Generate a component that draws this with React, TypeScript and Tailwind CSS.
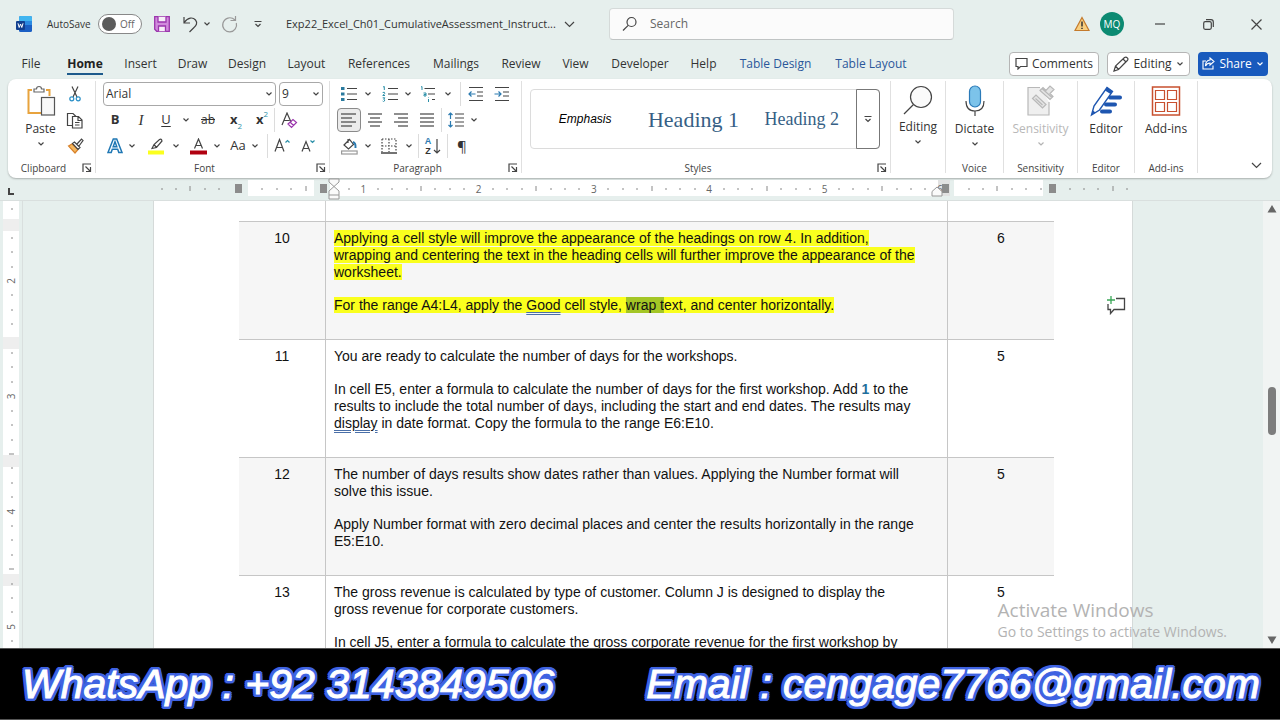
import React from 'react';

const RULER_ZERO = 95;
const EIGHTH = 115.3 / 8;

const TABS = [
  { label: 'File', width: 'w-[42px]' },
  { label: 'Home', width: 'w-[66px]' },
  { label: 'Insert', width: 'w-[45px]' },
  { label: 'Draw', width: 'w-[59px]' },
  { label: 'Design', width: 'w-[50px]' },
  { label: 'Layout', width: 'w-[69px]' },
  { label: 'References', width: 'w-[76px]' },
  { label: 'Mailings', width: 'w-[78px]' },
  { label: 'Review', width: 'w-[52px]' },
  { label: 'View', width: 'w-[57px]' },
  { label: 'Developer', width: 'w-[72px]' },
  { label: 'Help', width: 'w-[55px]' },
  { label: 'Table Design', width: 'w-[89px]', contextual: true },
  { label: 'Table Layout', width: 'w-[102px]', contextual: true },
];

const ROWS = [
  {
    step: '10',
    points: '6',
    body: (
      <>
        <p>
          <mark className="bg-[#faff1e] text-inherit">
            Applying a cell style will improve the appearance of the headings on row 4. In addition,
            <br />
            wrapping and centering the text in the heading cells will further improve the appearance of the
            <br />
            worksheet.
          </mark>
        </p>
        <p>
          <mark className="bg-[#faff1e] text-inherit">
            For the range A4:L4, apply the{' '}
            <span className="underline decoration-[#4a6fa8] decoration-double underline-offset-2">Good</span> cell style,{' '}
            <span className="bg-[#a4c626]">wrap t</span>ext, and center horizontally.
          </mark>
        </p>
      </>
    ),
  },
  {
    step: '11',
    points: '5',
    body: (
      <>
        <p>You are ready to calculate the number of days for the workshops.</p>
        <p>
          In cell E5, enter a formula to calculate the number of days for the first workshop. Add{' '}
          <b className="text-[#1f6f9c]">1</b> to the
          <br />
          results to include the total number of days, including the start and end dates. The results may
          <br />
          <span className="underline decoration-[#4a6fa8] decoration-double underline-offset-2">display</span> in date
          format. Copy the formula to the range E6:E10.
        </p>
      </>
    ),
  },
  {
    step: '12',
    points: '5',
    body: (
      <>
        <p>
          The number of days results show dates rather than values. Applying the Number format will
          <br />
          solve this issue.
        </p>
        <p>
          Apply Number format with zero decimal places and center the results horizontally in the range
          <br />
          E5:E10.
        </p>
      </>
    ),
  },
  {
    step: '13',
    points: '5',
    body: (
      <>
        <p>
          The gross revenue is calculated by type of customer. Column J is designed to display the
          <br />
          gross revenue for corporate customers.
        </p>
        <p>In cell J5, enter a formula to calculate the gross corporate revenue for the first workshop by</p>
      </>
    ),
  },
];

const Svg = ({ w, h, children }: { w: number; h: number; children: React.ReactNode }) => (
  <svg width={w} height={h} viewBox={`0 0 ${w} ${h}`} fill="none" stroke="#444" strokeWidth="1.2" className="shrink-0">
    {children}
  </svg>
);

const Chevron = () => (
  <Svg w={8} h={6}>
    <path d="M1.5 1.5 4 4 6.500 1.5" />
  </Svg>
);

const Tool = ({ label, className, children }: { label: string; className: string; children: React.ReactNode }) => (
  <button aria-label={label} className={`flex h-6 shrink-0 items-center justify-center ${className}`}>
    {children}
  </button>
);

const Drop = ({ className = 'w-2' }: { className?: string }) => (
  <Tool label="More options" className={className}>
    <Chevron />
  </Tool>
);

const Divider = () => <span className="h-6 w-px shrink-0 bg-[#dcdcdc]" />;

const Launcher = () => (
  <button aria-label="Dialog settings" className="absolute right-[3px] bottom-0">
    <Svg w={10} h={10}>
      <path d="M1 9V1h8M3.5 3.5 8 8M8.5 4v4.5H4" />
    </Svg>
  </button>
);

const Group = ({
  name,
  className,
  launcher,
  children,
}: {
  name: string;
  className: string;
  launcher?: boolean;
  children: React.ReactNode;
}) => (
  <section className={`relative flex shrink-0 flex-col border-r border-[#e0e0e0] ${className}`}>
    <div className="h-[79px] shrink-0">{children}</div>
    <div className={`text-center text-[10px] leading-4 text-[#444] ${launcher ? 'pr-4' : ''}`}>{name}</div>
    {launcher && <Launcher />}
  </section>
);

const Row = ({ className = '', children }: { className?: string; children: React.ReactNode }) => (
  <div className={`flex h-[26px] items-center ${className}`}>{children}</div>
);

const BigButton = ({
  label,
  drop,
  disabled,
  children,
}: {
  label: string;
  drop?: boolean;
  disabled?: boolean;
  children: React.ReactNode;
}) => (
  <button
    disabled={disabled}
    className={`flex w-full flex-col items-center pt-1 text-[12px] leading-4 ${disabled ? 'text-[#b8b8b8]' : 'text-[#333]'}`}
  >
    {children}
    <span className="mt-1">{label}</span>
    {drop && (
      <span className={disabled ? 'mt-1 opacity-40' : 'mt-1'}>
        <Chevron />
      </span>
    )}
  </button>
);

const Lines = ({ rows }: { rows: [number, number][] }) => (
  <Svg w={16} h={16}>
    {rows.map(([from, to], i) => (
      <path key={i} d={`M${from} ${2 + i * 4}H${to}`} />
    ))}
  </Svg>
);

const TitleBar = () => (
  <header className="flex h-12 shrink-0 items-center text-[#333]">
    <div className="flex w-[609px] shrink-0 items-center pl-4">
      <svg width="16" height="16" viewBox="0 0 16 16" className="shrink-0">
        <rect x="3" y="0" width="13" height="16" rx="1.5" fill="#1b5fc4" />
        <path d="M3 1.5Q3 0 4.500 0H14.500Q16 0 16 1.500V5H3Z" fill="#41b5f0" />
        <path d="M3 5H16V9H3Z" fill="#2b8ae2" />
        <rect x="0" y="5" width="9" height="9" rx="1" fill="#123f8f" />
        <path d="M2 7.300 3.200 11.500 4.500 8 5.800 11.500 7 7.300" stroke="#fff" strokeWidth="1" fill="none" />
      </svg>
      <label htmlFor="autosave" className="ml-[15px] w-[51px] text-[10px]">
        AutoSave
      </label>
      <span className="relative flex h-5 w-11 items-center rounded-full border border-[#888] bg-white pl-[3px]">
        <input
          id="autosave"
          type="checkbox"
          role="switch"
          className="h-3.5 w-3.5 appearance-none rounded-full bg-[#5c5c5c]"
        />
        <span className="ml-1 text-[10px] text-[#666]">Off</span>
      </span>
      <button aria-label="Save" className="ml-3">
        <svg width="16" height="16" viewBox="0 0 16 16" fill="#d08bdc" stroke="#9b35ad" strokeWidth="1.300">
          <path d="M.7.700H15.300V15.300H2.700L.7 13.300Z" />
          <path d="M4 .700V6H12V.700M4.500 15.300V10H11.500V15.300" fill="#f6eef8" />
        </svg>
      </button>
      <button aria-label="Undo" className="ml-3">
        <Svg w={17} h={18}>
          <path d="M2 2V8H8M2.300 7.500C6 2 11 2 13.500 5S14 11 12 12.500L7.500 17" />
        </Svg>
      </button>
      <Drop className="ml-0.5 w-3" />
      <button aria-label="Redo" className="ml-2">
        <svg width="17" height="18" viewBox="0 0 17 18" fill="none" stroke="#999" strokeWidth="1.200">
          <path d="M9.500 5.500H14.500V1M14 5C9.500 .800 3.500 3 2 8S4.500 17 9 16.800 16.500 12 15.300 8" />
        </svg>
      </button>
      <button aria-label="Customize Quick Access Toolbar" className="ml-4">
        <Svg w={8} h={8}>
          <path d="M.5 1.500H7.500M1.500 4 4 6.500 6.500 4" />
        </Svg>
      </button>
      <button className="ml-6 flex items-center gap-2 text-[11px] whitespace-nowrap">
        Exp22_Excel_Ch01_CumulativeAssessment_Instruct...
        <Svg w={11} h={7}>
          <path d="M1 1 5.500 5.500 10 1" />
        </Svg>
      </button>
    </div>
    <label className="flex h-8 w-[345px] items-center rounded border border-[#d5dad9] border-b-[#c0c4c4] bg-[#fbfbfb] pl-3">
      <Svg w={16} h={16}>
        <circle cx="9.500" cy="6" r="4.500" />
        <path d="M6.200 9.300 1 14.500" />
      </Svg>
      <input
        type="search"
        placeholder="Search"
        aria-label="Search"
        className="ml-3 min-w-0 flex-1 bg-transparent text-[12px] outline-none placeholder:text-[#666]"
      />
    </label>
    <div className="ml-auto flex items-center">
      <svg width="16" height="16" viewBox="0 0 16 16" className="mr-2.5">
        <path d="M8 1.500 15 14.500H1Z" fill="#f8cf80" stroke="#c47a2c" strokeWidth="1.200" />
        <path d="M8 5.500V10.500M8 11.700V13" stroke="#333" strokeWidth="1.500" />
      </svg>
      <button className="mr-3 h-6 w-6 rounded-full bg-[#0c8a72] text-[10px] text-white">MQ</button>
      <button aria-label="Minimize" className="flex w-12 justify-center">
        <Svg w={10} h={10}>
          <path d="M0 5H10" />
        </Svg>
      </button>
      <button aria-label="Restore" className="flex w-12 justify-center">
        <Svg w={11} h={11}>
          <rect x=".7" y="2.700" width="7.600" height="7.600" rx="1.500" />
          <path d="M3 .700H8Q10.300.700 10.300 3V8" />
        </Svg>
      </button>
      <button aria-label="Close" className="flex w-12 justify-center">
        <Svg w={11} h={11}>
          <path d="M.5.500 10.500 10.500M10.500.500.5 10.500" />
        </Svg>
      </button>
    </div>
  </header>
);

const TabBar = () => (
  <nav className="flex h-[31px] shrink-0 items-center pr-3 pl-2.5 text-[12px] text-[#333]">
    {TABS.map((tab) => (
      <a key={tab.label} href="#" className={`flex h-full shrink-0 justify-center whitespace-nowrap ${tab.width}`}>
        <span
          className={
            tab.label === 'Home'
              ? 'h-[27px] border-b-2 border-[#1d5a8c] leading-8 font-bold text-[#222]'
              : tab.contextual
                ? 'leading-8 text-[#2b579a]'
                : 'leading-8'
          }
        >
          {tab.label}
        </span>
      </a>
    ))}
    <div className="ml-auto flex gap-2">
      <button className="flex h-6 w-[90px] items-center justify-center gap-1 rounded border border-[#b5b5b5] bg-white">
        <Svg w={13} h={13}>
          <path d="M1 1.500H12V9.500H5.500L3 12V9.500H1Z" />
        </Svg>
        Comments
      </button>
      <button className="flex h-6 w-[83px] items-center justify-center gap-1 rounded border border-[#b5b5b5] bg-white">
        <Svg w={16} h={16}>
          <path d="M1 15 2.500 10 11.500 1.500Q13 .500 14.300 1.800T14.300 4.500L5.500 13.500ZM10 3 13 6M2.500 10 5.500 13.500" />
        </Svg>
        Editing
        <Chevron />
      </button>
      <button className="flex h-6 w-[70px] items-center justify-center gap-1 rounded bg-[#185abd] text-white">
        <svg width="13" height="13" viewBox="0 0 13 13" fill="none" stroke="#fff" strokeWidth="1.100">
          <path d="M4 4H1V12H11V8.500M8 1 12 4.500 8 8V6C5.500 6 4.500 7 3.500 9 3.500 5.500 5 3.300 8 3Z" />
        </svg>
        Share
        <svg width="8" height="6" viewBox="0 0 8 6" fill="none" stroke="#fff" strokeWidth="1.200">
          <path d="M1.500 1.500 4 4 6.500 1.500" />
        </svg>
      </button>
    </div>
  </nav>
);

const Clipboard = () => (
  <Group name="Clipboard" className="w-[88px]" launcher>
    <div className="flex">
      <div className="w-[55px] pl-2.5">
        <BigButton label="Paste" drop>
          <svg width="30" height="32" viewBox="0 0 30 32" fill="none">
            <path d="M6 5H2.500V28H15M20 5H23.500V11" stroke="#e8a33d" strokeWidth="2" />
            <path d="M8 7V4H10.500Q10.500 1.500 13 1.500T15.500 4H18V7Z" fill="#fff" stroke="#666" strokeWidth="1.200" />
            <rect x="15.500" y="12.500" width="13" height="17.500" fill="#f8f8f8" stroke="#555" strokeWidth="1.200" />
          </svg>
        </BigButton>
      </div>
      <div>
        <Row>
          <Tool label="Cut" className="w-6">
            <Svg w={12} h={16}>
              <path d="M3 .5 8 11M9 .5 4 11" />
              <circle cx="2.800" cy="12.800" r="2" stroke="#2a8fc7" />
              <circle cx="9.200" cy="12.800" r="2" stroke="#2a8fc7" />
            </Svg>
          </Tool>
        </Row>
        <Row>
          <Tool label="Copy" className="w-6">
            <Svg w={18} h={17}>
              <path d="M6 13.500H1.500V1.500H7L10 4.500" />
              <path d="M6.500 4.500H12.500L16 8V16H6.500ZM12 4.500V8.500H16M9 10.500H13.500M9 13H13.500" />
            </Svg>
          </Tool>
        </Row>
        <Row>
          <Tool label="Format Painter" className="w-6">
            <Svg w={17} h={16}>
              <path d="M1.500 8 5 6 11 11.500 8 15Z" fill="#f4b860" stroke="#d9822b" />
              <path d="M5.500 5.500 7.500 4 13 9.500 11 11.500ZM10 6 14.500 1 16 2.500 12 8" fill="#fff" />
            </Svg>
          </Tool>
        </Row>
      </div>
    </div>
  </Group>
);

const FontGroup = () => (
  <Group name="Font" className="w-[234px]" launcher>
    <Row className="gap-[3px] pl-[7px]">
      <span className="flex h-6 w-[173px] items-center rounded border border-[#a8a8a8] pr-0.5">
        <select aria-label="Font" className="min-w-0 flex-1 appearance-none pl-0.5 text-[12px] leading-4 text-[#333]">
          <option>Arial</option>
        </select>
        <Chevron />
      </span>
      <span className="flex h-6 w-11 items-center rounded border border-[#a8a8a8] pr-0.5">
        <select aria-label="Font size" className="min-w-0 flex-1 appearance-none pl-0.5 text-[12px] leading-4 text-[#333]">
          <option>9</option>
        </select>
        <Chevron />
      </span>
    </Row>
    <Row className="pl-1.5 text-[13px] text-[#333]">
      <Tool label="Bold" className="w-[26px] font-bold">B</Tool>
      <Tool label="Italic" className="w-[26px] font-['Liberation_Serif'] text-[15px] italic">I</Tool>
      <Tool label="Underline" className="w-6 underline underline-offset-2">U</Tool>
      <Drop className="w-4" />
      <Tool label="Strikethrough" className="w-7 text-[12px] line-through">ab</Tool>
      <Tool label="Subscript" className="w-7 font-bold">
        x<span className="self-end text-[8px] font-normal text-[#2a8fa8]">2</span>
      </Tool>
      <Tool label="Superscript" className="w-6 font-bold">
        x<span className="self-start text-[8px] font-normal text-[#2a8fa8]">2</span>
      </Tool>
      <Divider />
      <Tool label="Clear formatting" className="w-7">
        <Svg w={17} h={17}>
          <path d="M1 13 6 1 10 10M3 8.500H8.500" />
          <path d="M7 12 12 7.500 15.500 10.500 10.500 15.500ZM9 10 12.500 13.500" stroke="#9b35ad" />
        </Svg>
      </Tool>
    </Row>
    <Row className="pl-1.5 text-[#333]">
      <Tool label="Text effects" className="w-[26px]">
        <svg width="16" height="16" viewBox="0 0 16 16" fill="#fff" stroke="#1f77b4" strokeWidth="1.500">
          <path d="M1 14.500 6.300 1H9.700L15 14.500H11.800L10.700 11.300H5.300L4.200 14.500ZM6.200 8.700H9.800L8 3.800Z" />
        </svg>
      </Tool>
      <Drop />
      <Tool label="Highlight color" className="w-9 pl-1">
        <Svg w={18} h={17}>
          <path d="M1 14.500H17" stroke="#fbff1e" strokeWidth="4" />
          <path d="M5 10.500 7 6.500 12.500 1.500Q14.500 .500 15 3L9.500 9.500ZM7 6.500 9.500 9.500" />
        </Svg>
      </Tool>
      <Drop />
      <Tool label="Font color" className="w-[33px] pl-1">
        <Svg w={17} h={17}>
          <path d="M0 14.500H17" stroke="#b00010" strokeWidth="4" />
          <path d="M4.500 10.500 8.500 1 12.500 10.500M6 7.500H11" />
        </Svg>
      </Tool>
      <Drop />
      <Tool label="Change case" className="w-[30px] pl-1 text-[13px]">Aa</Tool>
      <Drop />
      <span className="w-2" />
      <Divider />
      <Tool label="Grow font" className="w-7">
        <Svg w={16} h={16}>
          <path d="M1 13.500 5.500 1.500 10 13.500M2.500 9.500H8.500" />
          <path d="M11.500 4.500 13.500 2.500 15.500 4.500" stroke="#2a8fa8" />
        </Svg>
      </Tool>
      <Tool label="Shrink font" className="w-6">
        <Svg w={14} h={16}>
          <path d="M1 13.500 5 3.500 9 13.500M2.500 10.500H7.500" />
          <path d="M9.500 2.500 11.500 4.500 13.500 2.500" stroke="#2a8fa8" />
        </Svg>
      </Tool>
    </Row>
  </Group>
);

const Paragraph = () => (
  <Group name="Paragraph" className="w-48" launcher>
    <Row className="pl-[7px]">
      <Tool label="Bullets" className="w-6">
        <Svg w={16} h={16}>
          <path d="M6 2.500H16M6 8H16M6 13.500H16" />
          <path d="M0 2.500H3.500M0 8H3.500M0 13.500H3.500" stroke="#2a7a9e" strokeWidth="3" />
        </Svg>
      </Tool>
      <Drop className="w-3.5" />
      <Tool label="Numbering" className="w-[29px]">
        <Svg w={16} h={16}>
          <path d="M6 2.500H16M6 8H16M6 13.500H16" />
          <path
            d="M1 1 2.300.500V4M.7 6.500Q3 5.500 2.700 7.500L.8 9.500H3M.7 11.800H2.800L1.700 13.300Q3.200 13.500 2.500 15T.7 15"
            stroke="#2a8fa8"
            strokeWidth="1"
          />
        </Svg>
      </Tool>
      <Drop />
      <Tool label="Multilevel list" className="w-8">
        <Svg w={16} h={16}>
          <path d="M4.500 2.500H15M8 8H15M12 13.500H15" />
          <path d="M1 1 2 .500V4M3.500 7H6V10H4V8.500H6M8.500 11.500V12M8.500 13V16" stroke="#2a8fa8" strokeWidth="1" />
        </Svg>
      </Tool>
      <Drop />
      <span className="w-2" />
      <Divider />
      <Tool label="Decrease indent" className="w-[30px]">
        <Svg w={16} h={16}>
          <path d="M1 1.500H15M9 6H15M9 10H15M1 14.500H15" />
          <path d="M7.500 8H1M3.500 5.500 1 8 3.500 10.500" stroke="#2a7ab0" />
        </Svg>
      </Tool>
      <Tool label="Increase indent" className="w-[22px]">
        <Svg w={16} h={16}>
          <path d="M1 1.500H15M9 6H15M9 10H15M1 14.500H15" />
          <path d="M.5 8H7M4.500 5.500 7 8 4.500 10.500" stroke="#2a7ab0" />
        </Svg>
      </Tool>
    </Row>
    <Row className="pl-[7px]">
      <Tool label="Align left" className="w-6 rounded border border-[#8a8a8a] bg-[#ebebeb]">
        <Lines rows={[[0, 15], [0, 11], [0, 15], [0, 11]]} />
      </Tool>
      <Tool label="Center" className="w-7">
        <Lines rows={[[1, 15], [3, 13], [1, 15], [3, 13]]} />
      </Tool>
      <Tool label="Align right" className="w-6">
        <Lines rows={[[1, 15], [5, 15], [1, 15], [5, 15]]} />
      </Tool>
      <Tool label="Justify" className="w-7">
        <Lines rows={[[1, 15], [1, 15], [1, 15], [1, 15]]} />
      </Tool>
      <Divider />
      <Tool label="Line spacing" className="w-7">
        <Svg w={16} h={16}>
          <path d="M7 2H16M7 6H16M7 10H16M7 14H16" />
          <path d="M2.500 1V7M.5 3 2.500 1 4.500 3M2.500 9V15M.5 13 2.500 15 4.500 13" stroke="#2a7ab0" />
        </Svg>
      </Tool>
      <Drop />
    </Row>
    <Row className="pl-[7px]">
      <Tool label="Shading" className="w-6">
        <Svg w={17} h={17}>
          <rect x=".6" y="13" width="15.500" height="3" stroke="#999" />
          <path d="M3 7 8.500 1.500 12.500 6.500 7.500 11ZM7 1V5" />
          <path d="M12 4Q15 5 14.500 10" stroke="#2a7ab0" strokeWidth="2" />
        </Svg>
      </Tool>
      <Drop className="w-3.5" />
      <Tool label="Borders" className="w-7">
        <Svg w={16} h={16}>
          <path d="M1 1H15V14M1 1V14M8 1V14M1 8H15" strokeDasharray="1.500 1.500" />
          <path d="M0 15H16" strokeWidth="1.500" />
        </Svg>
      </Tool>
      <Drop className="w-3" />
      <span className="w-[3px]" />
      <Divider />
      <Tool label="Sort" className="w-7 gap-0.5">
        <span className="flex flex-col font-['Liberation_Sans'] text-[9px] leading-[10px] font-bold">
          <span className="text-[#2a7ab0]">A</span>
          <span className="text-[#333]">Z</span>
        </span>
        <Svg w={8} h={16}>
          <path d="M4 1V15M1 12 4 15 7 12" />
        </Svg>
      </Tool>
      <Divider />
      <Tool label="Show paragraph marks" className="w-7 text-[15px] text-[#333]">¶</Tool>
    </Row>
  </Group>
);

const Styles = () => (
  <Group name="Styles" className="w-[369px]" launcher>
    <div className="px-2 pt-2">
      <div className="flex h-[60px] w-[350px] rounded border border-[#dcdcdc]">
        <button className="flex-1 font-['Liberation_Sans'] text-[12px] text-black italic">Emphasis</button>
        <button className="flex-1 font-['Liberation_Serif'] text-[22px] text-[#365f85]">Heading 1</button>
        <button className="flex-1 font-['Liberation_Serif'] text-[18px] text-[#365f85]">Heading 2</button>
        <button
          aria-label="More styles"
          className="-my-px -mr-px flex w-6 items-center justify-center rounded-r border border-[#777]"
        >
          <Svg w={8} h={8}>
            <path d="M.5 1.500H7.500M1.500 4 4 6.500 6.500 4" />
          </Svg>
        </button>
      </div>
    </div>
  </Group>
);

const Ribbon = () => (
  <div className="mx-2 flex h-[99px] shrink-0 rounded-lg bg-white pt-[2px] pb-[5px] shadow-[0_1px_2px_#0004]">
    <Clipboard />
    <FontGroup />
    <Paragraph />
    <Styles />
    <Group name="" className="w-[55px]">
      <BigButton label="Editing" drop>
        <Svg w={30} h={30}>
          <circle cx="18" cy="12" r="10.500" fill="#fafafa" />
          <path d="M10.500 19.500 1 29" />
        </Svg>
      </BigButton>
    </Group>
    <Group name="Voice" className="w-[58px]">
      <BigButton label="Dictate" drop>
        <Svg w={20} h={32}>
          <rect x="4.500" y="1" width="11" height="21" rx="5.500" fill="#7cc3ea" stroke="#2a7ab8" />
          <path d="M1 16Q1 26 10 26T19 16M10 26V31" />
        </Svg>
      </BigButton>
    </Group>
    <Group name="Sensitivity" className="w-[74px]">
      <BigButton label="Sensitivity" drop disabled>
        <svg width="28" height="32" viewBox="0 0 28 32" fill="#efefef" stroke="#b8b8b8" strokeWidth="1.200">
          <path d="M13 2.500H1V30H22V17" />
          <path d="M5.500 13.500 9 10 19 19.500 15.500 23ZM8.500 13.500 15.500 20" fill="#e4e4e4" />
          <path d="M13 5.500 16 2.500 19 5.500 23 1 27 4.500 23 8.500 26 11.500 23 14.500ZM15 3.500 25 12.500" fill="#e4e4e4" />
        </svg>
      </BigButton>
    </Group>
    <Group name="Editor" className="w-[57px]">
      <BigButton label="Editor">
        <svg width="32" height="32" viewBox="0 0 32 32" fill="none">
          <path d="M20 12.500H30M16 19.500H25M12 26.500H20" stroke="#1e56b0" strokeWidth="4" strokeLinecap="round" />
          <path d="M1.500 30 4 21 17 2.500 22.500 6.500 9.500 25Z" fill="#fff" stroke="#1e56b0" strokeWidth="1.400" />
          <path d="M17 2.500 22.500 6.500 20.500 9 15 5.500ZM1.500 30 3 25.500 5.500 27.500Z" fill="#1e56b0" />
        </svg>
      </BigButton>
    </Group>
    <Group name="Add-ins" className="w-[63px]">
      <BigButton label="Add-ins">
        <svg width="30" height="32" viewBox="0 0 30 32" fill="none" stroke="#c8502f" strokeWidth="1.200">
          <rect x="1.500" y="2" width="27" height="28" strokeWidth="1.500" />
          <path d="M4.500 5.500H13.500V14.500H4.500ZM16.500 5.500H25.500V14.500H16.500ZM4.500 17.500H13.500V26.500H4.500ZM16.500 17.500H25.500V26.500H16.500Z" />
        </svg>
      </BigButton>
    </Group>
    <div className="flex flex-1 items-end justify-end pr-2.5 pb-1">
      <button aria-label="Collapse ribbon">
        <Svg w={11} h={7}>
          <path d="M1 1 5.500 5.500 10 1" />
        </Svg>
      </button>
    </div>
  </div>
);

const HorizontalRuler = () => (
  <div className="flex h-[23px] shrink-0 border-b border-[#d9dfde] pr-[17px]">
    <div className="w-[23px] shrink-0 pt-2.5 pl-2">
      <svg width="6" height="7" viewBox="0 0 6 7" stroke="#444" strokeWidth="2" fill="none">
        <path d="M1 0V6H6" />
      </svg>
    </div>
    <div className="flex min-w-0 flex-1 justify-center">
      <svg width="980" height="22" viewBox="0 0 980 22" className="shrink-0 overflow-visible">
        <path d="M95 2H161V18H95ZM177 2H785V18H177ZM801 2H890V18H801Z" fill="#fff" />
        <path d="M785 2H797V18H785Z" fill="#e2e2e2" />
        {Array.from({ length: 68 }, (_, i) => i - 6)
          .filter((k) => k % 8 !== 0 && ![-1, 5, 6, 49].includes(k))
          .map((k) => {
            const x = Math.round(RULER_ZERO + k * EIGHTH);
            const half = k % 4 === 0;
            return <path key={k} d={half ? `M${x} 8V13` : `M${x} 10V12`} stroke="#888" strokeWidth="1" />;
          })}
        {[1, 2, 3, 4, 5, 6].map((n) => (
          <text key={n} x={RULER_ZERO + n * 8 * EIGHTH} y="15" textAnchor="middle" fontSize="10" fill="#666">
            {n}
          </text>
        ))}
        <path d="M82 6H89V15H82ZM167 6H174V15H167ZM789 6H796V15H789ZM896 6H903V15H896Z" fill="#8c8c8c" />
        <path
          d="M176 1H186V4L181 8.500 176 4ZM181 8.500 186 13V21H176V13ZM176 17H186M784 9 789 13.500V18H779V13.500Z"
          fill="#fafafa"
          stroke="#999"
        />
      </svg>
    </div>
  </div>
);

const VerticalRuler = () => (
  <div className="w-[23px] shrink-0 overflow-hidden border-r border-[#d9dfde]">
    <svg width="22" height="447" viewBox="0 0 22 447">
      <path d="M3 0H19V447H3Z" fill="#fff" />
      <path d="M3 18H19V30H3ZM3 136H19V148H3ZM3 254H19V266H3ZM3 373H19V385H3Z" fill="#eeeeee" />
      {Array.from({ length: 32 }, (_, i) => i - 5)
        .filter((k) => k % 8 !== 0 && ![-4, 4].includes(k))
        .map((k) => {
          const y = Math.round(80 + k * EIGHTH);
          return <path key={k} d={k % 4 === 0 ? `M9 ${y}H14` : `M11 ${y}H13`} stroke="#888" />;
        })}
      {[2, 3, 4, 5].map((n, i) => (
        <text
          key={n}
          transform={`translate(15 ${80 + i * 8 * EIGHTH}) rotate(-90)`}
          textAnchor="middle"
          fontSize="10"
          fill="#666"
        >
          {n}
        </text>
      ))}
    </svg>
  </div>
);

const Page = () => (
  <article className="relative w-[980px] shrink-0 border-x border-[#d5dad9] bg-white pl-[85px] font-['Liberation_Sans',sans-serif] text-[14px] leading-[17px] text-[#111]">
    <table className="w-[815px] table-fixed border-separate border-spacing-0">
      <colgroup>
        <col className="w-[86px]" />
        <col className="w-[623px]" />
        <col />
      </colgroup>
      <tbody>
        <tr className="h-5">
          <td />
          <td className="border-x border-[#cfcfcf]" />
          <td />
        </tr>
        {ROWS.map((row) => (
          <tr key={row.step} className="h-[118px] align-top odd:bg-white even:bg-[#f6f6f6]">
            <td className="border-t border-[#c6c6c6] pt-2 text-center">{row.step}</td>
            <td className="border-x border-t border-[#c6c6c6] pt-2 pl-2 whitespace-nowrap">
              <div className="flex flex-col gap-4">{row.body}</div>
            </td>
            <td className="border-t border-[#c6c6c6] pt-2 text-center">{row.points}</td>
          </tr>
        ))}
      </tbody>
    </table>
    <button aria-label="Add comment" className="absolute top-[94px] right-1.5">
      <Svg w={20} h={20}>
        <path d="M10 3.500H18.500V14.500H8L4.500 18.500V14.500H2V9" strokeWidth="1.300" />
        <path d="M5 1V9M1 5H9" stroke="#3aa657" strokeWidth="1.300" />
      </Svg>
    </button>
  </article>
);

const ScrollBar = () => (
  <div className="flex w-[17px] shrink-0 flex-col items-center bg-[#f1f4f3] py-1">
    <svg width="10" height="8" viewBox="0 0 10 8" fill="#666">
      <path d="M5 0 9.500 7.500H.5Z" />
    </svg>
    <div className="flex w-full flex-1 flex-col items-center">
      <div className="flex-[174]" />
      <div className="h-12 w-2 rounded-full bg-[#7d7d7d]" />
      <div className="flex-[201]" />
    </div>
    <svg width="10" height="8" viewBox="0 0 10 8" fill="#666">
      <path d="M5 8 9.500.500H.5Z" />
    </svg>
  </div>
);

const OUTLINED =
  '[-webkit-text-stroke:1px_#fff] [text-shadow:3px_0_#3f63e2,-3px_0_#3f63e2,0_3px_#3f63e2,0_-3px_#3f63e2,3px_2px_#3f63e2,-3px_2px_#3f63e2,3px_-2px_#3f63e2,-3px_-2px_#3f63e2,2px_3px_#3f63e2,-2px_3px_#3f63e2,2px_-3px_#3f63e2,-2px_-3px_#3f63e2,0_0_4px_#3f63e2]';

const ContactBanner = () => (
  <footer
    className={`flex h-[72px] shrink-0 items-center justify-between border-y border-[#555] bg-black pt-0.5 pr-5 pl-[22px] font-['Liberation_Sans',sans-serif] text-[41px] whitespace-nowrap text-white italic ${OUTLINED}`}
  >
    <span>WhatsApp : +92 3143849506</span>
    <span>Email : cengage7766@gmail.com</span>
  </footer>
);

export default function App() {
  return (
    <div className="flex h-screen flex-col overflow-hidden bg-[#e6efed] font-['Open_Sans','Noto_Sans',sans-serif]">
      <TitleBar />
      <TabBar />
      <Ribbon />
      <HorizontalRuler />
      <main className="relative flex min-h-0 flex-1 overflow-hidden">
        <VerticalRuler />
        <div className="flex min-w-0 flex-1 justify-center overflow-hidden">
          <Page />
        </div>
        <ScrollBar />
        <div className="pointer-events-none absolute right-[53px] bottom-1.5 text-[#b3b3b3]">
          <p className="text-[19px] leading-6">Activate Windows</p>
          <p className="text-[14px] leading-5">Go to Settings to activate Windows.</p>
        </div>
      </main>
      <ContactBanner />
    </div>
  );
}
